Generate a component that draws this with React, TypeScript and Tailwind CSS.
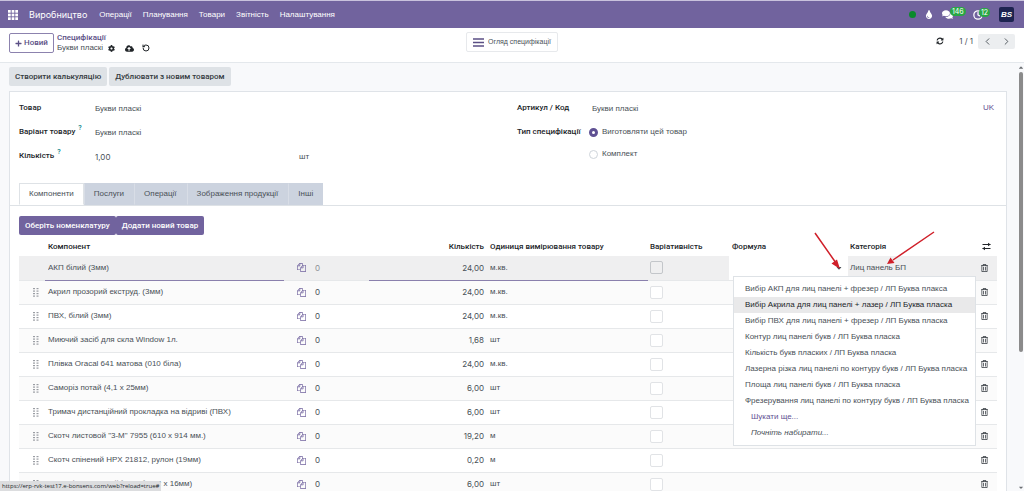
import { useState } from 'react';
import { Clock, RotateCcw, ChevronLeft, ChevronRight } from 'lucide-react';
import { FaPlus, FaCog, FaCloudUploadAlt, FaTint, FaComments, FaRegTrashAlt, FaCaretDown, FaCaretUp } from 'react-icons/fa';

interface Line {
  name: string;
  qty: string;
  unit: string;
}

const menuItems = ['Операції', 'Планування', 'Товари', 'Звітність', 'Налаштування'];

const tabs = ['Компоненти', 'Послуги', 'Операції', 'Зображення продукції', 'Інші'];

const lines: Line[] = [
  { name: 'АКП білий (3мм)', qty: '24,00', unit: 'м.кв.' },
  { name: 'Акрил прозорий екструд. (3мм)', qty: '24,00', unit: 'м.кв.' },
  { name: 'ПВХ, білий (3мм)', qty: '24,00', unit: 'м.кв.' },
  { name: 'Миючий засіб для скла Window 1л.', qty: '1,68', unit: 'шт' },
  { name: 'Плівка Oracal 641 матова (010 біла)', qty: '24,00', unit: 'м.кв.' },
  { name: 'Саморіз потай (4,1 х 25мм)', qty: '6,00', unit: 'шт' },
  { name: 'Тримач дистанційний прокладка на відриві (ПВХ)', qty: '6,00', unit: 'шт' },
  { name: 'Скотч листовой "3-М" 7955 (610 х 914 мм.)', qty: '19,20', unit: 'м' },
  { name: 'Скотч спінений HPX 21812, рулон (19мм)', qty: '0,20', unit: 'м' },
  { name: 'Саморіз з пресшайбою цб (4,2 х 16мм)', qty: '6,00', unit: 'шт' },
];

const formulas = [
  'Вибір АКП для лиц панелі + фрезер / ЛП Буква плакса',
  'Вибір Акрила для лиц панелі + лазер / ЛП Буква пласка',
  'Вибір ПВХ для лиц панелі + фрезер / ЛП Буква пласка',
  'Контур лиц панелі букв / ЛП Буква пласка',
  'Кількість букв пласких / ЛП Буква пласка',
  'Лазерна різка лиц панелі по контуру букв / ЛП Буква пласка',
  'Площа лиц панелі букв / ЛП Буква пласка',
  'Фрезерування лиц панелі по контуру букв / ЛП Буква пласка',
];

// Roboto has a real medium weight, used for labels, headings and buttons
const strong = "font-['Roboto',sans-serif] font-medium";

function AppsIcon() {
  return (
    <svg viewBox="0 0 11 11" className="w-[10px] h-[10px]" fill="currentColor">
      {[0, 4, 8].map((y) =>
        [0, 4, 8].map((x) => <rect key={`${x}-${y}`} x={x} y={y} width="3" height="3" />)
      )}
    </svg>
  );
}

function RefreshIcon() {
  return (
    <svg viewBox="0 0 1792 1792" className="w-[8px] h-[8px]" fill="currentColor">
      <path d="M1639 1056q0 5-1 7-64 268-268 434.5t-478 166.5q-146 0-282.5-55t-243.5-157l-129 129q-19 19-45 19t-45-19-19-45v-448q0-26 19-45t45-19h448q26 0 45 19t19 45-19 45l-137 137q71 66 161 102t187 36q134 0 250-65t186-179q11-17 53-117 8-23 30-23h192q13 0 22.5 9.5t9.5 22.5zm25-800v448q0 26-19 45t-45 19h-448q-26 0-45-19t-19-45 19-45l138-138q-148-137-349-137-134 0-250 65t-186 179q-11 17-53 117-8 23-30 23h-199q-13 0-22.5-9.5t-9.5-22.5v-7q65-268 270-434.5t480-166.5q146 0 284 55.5t245 156.5l130-129q19-19 45-19t45 19 19 45z" />
    </svg>
  );
}

function FilesIcon() {
  return (
    <svg viewBox="0 0 1792 1792" className="w-[9px] h-[9px]" fill="currentColor">
      <path d="M1696 384q40 0 68 28t28 68v1216q0 40-28 68t-68 28h-960q-40 0-68-28t-28-68v-288h-544q-40 0-68-28t-28-68v-672q0-40 20-88t48-76l408-408q28-28 76-48t88-20h416q40 0 68 28t28 68v328q68-40 128-40h416zm-544 213l-299 299h299v-299zm-640-384l-299 299h299v-299zm196 647l316-316v-416h-384v416q0 40-28 68t-68 28h-416v640h512v-256q0-40 20-88t48-76zm956 804v-1152h-384v416q0 40-28 68t-68 28h-416v640h896z" />
    </svg>
  );
}

function GripIcon() {
  return (
    <svg viewBox="0 0 6 9" className="w-[6px] h-[9px]" fill="#9a9da3">
      {[0, 2.5, 5, 7.5].map((y) => (
        <g key={y}>
          <rect x="0" y={y} width="2" height="1.2" />
          <rect x="3.5" y={y} width="2" height="1.2" />
        </g>
      ))}
    </svg>
  );
}

function SlidersIcon() {
  return (
    <svg viewBox="0 0 9 9" className="w-[9px] h-[9px]" stroke="currentColor" fill="currentColor">
      <path d="M0.5 2.5H8.5M0.5 6.5H8.5" strokeWidth="1" />
      <path d="M6 0.7V4.3L8.6 2.5Z M3 4.7V8.3L0.4 6.5Z" stroke="none" />
    </svg>
  );
}

function Arrows() {
  return (
    <svg
      viewBox="0 0 200 45"
      className="absolute right-0 -top-[8px] z-20 w-[200px] h-[45px] pointer-events-none"
      stroke="#d0202a"
      fill="#d0202a"
    >
      <path d="M18 4L39 34M137 3L96 31" strokeWidth="1.5" />
      <path d="M43 40L34.5 34.5L40 30.5Z M90 35L93.5 28.5L97.5 34Z" stroke="none" />
    </svg>
  );
}

function NavBar() {
  return (
    <header className="flex items-center h-[28px] shrink-0 px-2 border-t border-[#c9c2dd] bg-[#71639e] text-white">
      <button aria-label="Програми" className="mr-[11px]">
        <AppsIcon />
      </button>
      <a href="#" className="mr-3 font-['Inter',sans-serif] text-[9px]">Виробництво</a>
      <nav className="flex gap-[11px]">
        {menuItems.map((item) => (
          <a key={item} href="#">{item}</a>
        ))}
      </nav>
      <div className="flex items-center ml-auto pr-[2px]">
        <span className="w-[7px] h-[7px] rounded-full bg-[#0a8a2a] mr-[9px]" />
        <FaTint className="w-[8px] h-[9px] mr-[9px]" />
        <button aria-label="Повідомлення" className="relative mr-[20px]">
          <FaComments className="w-[11px] h-[11px]" />
          <span className="absolute -top-[2px] left-[8px] px-[2px] rounded-full bg-[#28a745] font-['Inter',sans-serif] text-[7px] leading-[9px]">146</span>
        </button>
        <button aria-label="Дії" className="relative mr-[16px]">
          <Clock className="w-[10px] h-[10px]" strokeWidth={3} />
          <span className="absolute -top-[2px] left-[6px] px-[2px] rounded-full bg-[#28a745] font-['Inter',sans-serif] text-[7px] leading-[9px]">12</span>
        </button>
        <span className="flex items-center justify-center w-[15px] h-[15px] rounded-[2px] bg-[#1d2350] text-[8px] font-bold italic">BS</span>
      </div>
    </header>
  );
}

function ControlPanel() {
  return (
    <div className="flex items-start h-[35px] shrink-0 pt-[4px] px-[9px] border-b border-[#e4e8ec] bg-white">
      <div className="flex flex-1 pt-px">
        <button className={`flex items-center gap-[2px] h-[20px] px-[5px] rounded-[2px] border border-[#8c82ae] text-[#5b4f85] ${strong}`}>
          <FaPlus className="w-[7px] h-[7px]" />
          Новий
        </button>
        <div className="ml-[3px] leading-[10px]">
          <a href="#" className={`block text-[#5b4f85] ${strong}`}>Специфікації</a>
          <div className="flex items-center text-[#495057]">
            Букви пласкі
            <button aria-label="Дії" className="ml-[5px] text-[#212529]"><FaCog className="w-[7px] h-[7px]" /></button>
            <button aria-label="Зберегти" className="ml-[10px] text-[#212529]"><FaCloudUploadAlt className="w-[9px] h-[9px]" /></button>
            <button aria-label="Скасувати" className="ml-[8px] text-[#212529]"><RotateCcw className="w-[8px] h-[8px]" strokeWidth={3} /></button>
          </div>
        </div>
      </div>
      <button className="flex items-center gap-[4px] h-[20px] px-[6px] rounded-[2px] border border-[#e7e9ec] text-[7px] text-[#495057]">
        <svg viewBox="0 0 11 9" className="w-[11px] h-[9px]" stroke="#5b4f85" strokeWidth="1.4">
          <path d="M0 1H11M0 4.5H11M0 8H11" />
        </svg>
        Огляд специфікації
      </button>
      <div className="flex flex-1 items-center justify-end h-[18px] text-[#495057]">
        <button aria-label="Оновити" className="mr-[15px] text-[#212529]"><RefreshIcon /></button>
        <span className="mr-[5px] font-['Inter',sans-serif]">1 / 1</span>
        <button aria-label="Попередній" className="flex items-center justify-center w-[19px] h-[15px] rounded-l-[2px] bg-[#eceef0]">
          <ChevronLeft className="w-[11px] h-[11px]" />
        </button>
        <button aria-label="Наступний" className="flex items-center justify-center w-[18px] h-[15px] rounded-r-[2px] bg-[#eceef0]">
          <ChevronRight className="w-[11px] h-[11px]" />
        </button>
      </div>
    </div>
  );
}

function Radio({ label, checked, onChange }: { label: string; checked: boolean; onChange: () => void }) {
  return (
    <label className="flex items-center gap-[4px] h-[22px]">
      <input
        type="radio"
        name="bom-type"
        checked={checked}
        onChange={onChange}
        className="appearance-none w-[9px] h-[9px] rounded-full border border-[#ced4da] bg-white checked:border-[3px] checked:border-[#5f5193]"
      />
      {label}
    </label>
  );
}

function Help() {
  return <sup className="ml-[3px] -top-[4px] text-[7px] leading-none text-[#017e84]">?</sup>;
}

function FormulaMenu() {
  const [active, setActive] = useState(1);

  return (
    <ul className="absolute left-[4px] top-[20px] z-10 w-[243px] py-[4px] border border-[#dee2e6] bg-white text-[#495057]">
      {formulas.map((formula, i) => (
        <li key={formula} onMouseEnter={() => setActive(i)}>
          <button
            className={`block w-full h-[16px] pl-[11px] text-left whitespace-nowrap ${
              i === active ? 'bg-[#e9e9ea] text-[#212529]' : ''
            }`}
          >
            {formula}
          </button>
        </li>
      ))}
      <li>
        <button className="block h-[16px] pl-[17px] text-[#5f5193]">Шукати ще...</button>
      </li>
      <li className="h-[16px] pl-[17px] leading-[16px] italic">Почніть набирати...</li>
    </ul>
  );
}

function ComponentsTable() {
  return (
    <div className="relative mt-[2px]">
      <Arrows />
      <table className="w-full table-fixed border-collapse text-left">
        <colgroup>
          <col className="w-[26px]" />
          <col />
          <col className="w-[85px]" />
          <col className="w-[116px]" />
          <col className="w-[163px]" />
          <col className="w-[81px]" />
          <col className="w-[119px]" />
          <col className="w-[128px]" />
          <col className="w-[21px]" />
        </colgroup>
        <thead className={strong}>
          <tr className="h-[19px] text-[#212529] whitespace-nowrap">
            <th />
            <th className="pl-[3px] font-medium">Компонент</th>
            <th />
            <th className="pr-[1px] text-right font-medium">Кількість</th>
            <th className="pl-[5px] font-medium">Одиниця вимірювання товару</th>
            <th className="pl-[2px] font-medium">Варіативність</th>
            <th className="pl-[3px] font-medium">Формула</th>
            <th className="pl-[2px] font-medium">Категорія</th>
            <th className="pl-[6px]">
              <button aria-label="Колонки" className="block"><SlidersIcon /></button>
            </th>
          </tr>
        </thead>
        <tbody>
          {lines.map((line, i) => {
            const editing = i === 0;
            return (
              <tr
                key={line.name}
                className={`h-[24px] border-b border-[#e6e8ea] ${
                  editing ? 'bg-[#efeff0]' : i % 2 ? 'bg-[#fbfbfb]' : 'bg-white'
                }`}
              >
                <td className="pl-[14px]">{!editing && <GripIcon />}</td>
                <td className={editing ? 'border-b border-[#8a80ad]' : ''}>
                  {editing ? (
                    <input aria-label="Компонент" defaultValue={line.name} className="block w-full pl-[3px] bg-transparent outline-none" />
                  ) : (
                    <div className="pl-[3px] whitespace-nowrap">{line.name}</div>
                  )}
                </td>
                <td>
                  <div className="flex items-center gap-[9px] pl-[13px] font-['Inter',sans-serif]">
                    <button aria-label="Структура" className="text-[#71639e]"><FilesIcon /></button>
                    <span className={editing ? 'text-[#8d9196]' : ''}>0</span>
                  </div>
                </td>
                <td className={`pr-[1px] text-right font-['Inter',sans-serif] ${editing ? 'border-b border-[#8a80ad]' : ''}`}>
                  {editing ? (
                    <input aria-label="Кількість" defaultValue={line.qty} className="block w-full text-right bg-transparent outline-none" />
                  ) : (
                    line.qty
                  )}
                </td>
                <td className={`pl-[5px] ${editing ? 'border-b border-[#8a80ad]' : ''}`}>
                  {editing ? (
                    <input aria-label="Одиниця вимірювання" defaultValue={line.unit} className="block w-full bg-transparent outline-none" />
                  ) : (
                    line.unit
                  )}
                </td>
                <td className="pl-[2px]">
                  <input
                    type="checkbox"
                    aria-label="Варіативність"
                    className={`block appearance-none w-[13px] h-[13px] rounded-[2px] border ${
                      editing ? 'border-[#c3c6ca]' : 'border-[#e1e3e6] bg-white'
                    }`}
                  />
                </td>
                <td className={`relative ${editing ? 'bg-white' : ''}`}>
                  {editing && (
                    <div className="flex items-center pr-[6px]">
                      <input aria-label="Формула" className="w-full min-w-0 pl-[3px] outline-none" />
                      <button aria-label="Показати варіанти"><FaCaretDown className="w-[6px] h-[8px]" /></button>
                      <FormulaMenu />
                    </div>
                  )}
                </td>
                <td className="pl-[2px] whitespace-nowrap">{editing && 'Лиц панель БП'}</td>
                <td className="pl-[5px]">
                  <button aria-label="Видалити" className="block text-[#343a40]"><FaRegTrashAlt className="w-[7px] h-[8px]" /></button>
                </td>
              </tr>
            );
          })}
        </tbody>
      </table>
    </div>
  );
}

export default function App() {
  const [tab, setTab] = useState(tabs[0]);
  const [bomType, setBomType] = useState('normal');

  return (
    <div className="relative flex flex-col h-screen overflow-hidden bg-[#f8f9fb] font-['Liberation_Sans',Arial,sans-serif] text-[8px] leading-[12px] text-[#495057]">
      <NavBar />
      <ControlPanel />
      <div className="flex flex-1 min-h-0">
        <main className="flex-1 min-w-0 overflow-hidden pl-[9px] pr-[10px] pt-[4px]">
          <div className={`flex gap-[2px] text-[#343a40] ${strong}`}>
            <button className="h-[19px] px-[6px] rounded-[2px] bg-[#dee2e6]">Створити калькуляцію</button>
            <button className="h-[19px] px-[6px] rounded-[2px] bg-[#dee2e6]">Дублювати з новим товаром</button>
          </div>

          <section className="mt-[5px] px-[9px] border border-[#dfe3e8] bg-white">
            <div className="grid grid-cols-2 gap-x-[18px] h-[91px] pt-[10px]">
              <dl className="grid grid-cols-[76px_1fr] auto-rows-[24px] content-start">
                <dt className={`text-[#212529] ${strong}`}>Товар</dt>
                <dd className="pt-px">Букви пласкі</dd>
                <dt className={`text-[#212529] whitespace-nowrap ${strong}`}>Варіант товару<Help /></dt>
                <dd className="pt-px">Букви пласкі</dd>
                <dt className={`text-[#212529] ${strong}`}>Кількість<Help /></dt>
                <dd className="flex pt-px">
                  <span className="w-[204px] font-['Inter',sans-serif]">1,00</span>
                  <span>шт</span>
                </dd>
              </dl>
              <dl className="grid grid-cols-[72px_1fr] auto-rows-[24px] content-start">
                <dt className={`text-[#212529] ${strong}`}>Артикул / Код</dt>
                <dd className="flex justify-between pl-[3px] pr-[3px]">
                  <span className="pt-px">Букви пласкі</span>
                  <button className="self-start text-[#5f5193]">UK</button>
                </dd>
                <dt className={`text-[#212529] whitespace-nowrap ${strong}`}>Тип специфікації</dt>
                <dd className="-mt-[5px]">
                  <Radio label="Виготовляти цей товар" checked={bomType === 'normal'} onChange={() => setBomType('normal')} />
                  <Radio label="Комплект" checked={bomType === 'kit'} onChange={() => setBomType('kit')} />
                </dd>
              </dl>
            </div>

            <div role="tablist" className="flex -mx-[9px] px-[9px] border-b border-[#dee2e6]">
              {tabs.map((t) => (
                <button
                  key={t}
                  role="tab"
                  aria-selected={t === tab}
                  onClick={() => setTab(t)}
                  className={`h-[22px] px-[9px] border ${
                    t === tab
                      ? '-mb-px border-[#dee2e6] border-b-white bg-white'
                      : 'border-[#ccd3df] border-l-[#d8dde6] bg-[#ccd3df]'
                  }`}
                >
                  {t}
                </button>
              ))}
            </div>

            <div className={`flex mt-[10px] text-white ${strong}`}>
              <button className="h-[19px] px-[6px] rounded-[2px] bg-[#71639e]">Оберіть номенклатуру</button>
              <button className="h-[19px] px-[6px] rounded-[2px] bg-[#71639e]">Додати новий товар</button>
            </div>

            <ComponentsTable />
          </section>
        </main>

        <div className="flex flex-col items-center w-[7px] pt-px text-[#6c6f73]">
          <FaCaretUp className="w-[6px] h-[7px]" />
          <div className="w-[4px] h-[280px] mt-px rounded-full bg-[#8b8b8b]" />
          <FaCaretDown className="w-[6px] h-[7px] mt-auto" />
        </div>
      </div>

      <div className="absolute left-0 bottom-0 z-30 px-[2px] rounded-tr-[2px] bg-[#dcdddf] font-['Open_Sans',sans-serif] text-[6px] leading-[10px] text-[#212529]">
        https://erp-rvk-test17.e-bonsens.com/web?reload=true#
      </div>
    </div>
  );
}
